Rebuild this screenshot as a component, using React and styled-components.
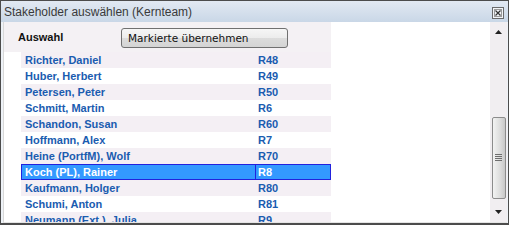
import React from 'react';
import {styled, createGlobalStyle} from 'styled-components';

const GlobalStyle = createGlobalStyle`
  html, body {
    margin: 0;
    padding: 0;
    background: #ffffff;
  }
`

const people = [
    {name: 'Richter, Daniel', code: 'R48'},
    {name: 'Huber, Herbert', code: 'R49'},
    {name: 'Petersen, Peter', code: 'R50'},
    {name: 'Schmitt, Martin', code: 'R6'},
    {name: 'Schandon, Susan', code: 'R60'},
    {name: 'Hoffmann, Alex', code: 'R7'},
    {name: 'Heine (PortfM), Wolf', code: 'R70'},
    {name: 'Koch (PL), Rainer', code: 'R8', selected: true},
    {name: 'Kaufmann, Holger', code: 'R80'},
    {name: 'Schumi, Anton', code: 'R81'},
    {name: 'Neumann (Ext.), Julia', code: 'R9'},
]

const WindowStyled = styled.div`
  box-sizing: border-box;
  width: 509px;
  height: 225px;
  border: 1px solid #4c4c4c;
  border-bottom-width: 2px;
  background: #eef2f7;
  display: flex;
  flex-direction: column;
  font-family: "Liberation Sans", Arial, sans-serif;
  overflow: hidden;
`

const TitleBarStyled = styled.div`
  height: 21px;
  flex-shrink: 0;
  display: flex;
  align-items: center;
  justify-content: space-between;
  padding: 0 4px 0 3px;
  background: linear-gradient(#e2e9f2, #c9d7e7);
  color: #3a3a3a;
  font-size: 12px;
`

const CloseButtonStyled = styled.div`
  width: 12px;
  height: 12px;
  margin-top: 3px;
  display: flex;
`

const BodyStyled = styled.div`
  flex: 1;
  display: flex;
  margin: 0 1px 0 2px;
  border-left: 1px solid #d8d8d8;
  border-bottom: 1px solid #e4e4e4;
  background: #ffffff;
  min-height: 0;
`

const ListPanelStyled = styled.div`
  width: 327px;
  display: flex;
  flex-direction: column;
  overflow: hidden;
`

const HeaderStyled = styled.div`
  height: 30px;
  flex-shrink: 0;
  display: flex;
  align-items: center;
  background: #f4f1f4;
`

const HeaderLabelStyled = styled.span`
  width: 103px;
  padding-left: 14px;
  font-size: 11px;
  font-weight: bold;
  color: #111;
`

const PrimaryButtonStyled = styled.button`
  width: 167px;
  height: 20px;
  margin-top: 1px;
  padding: 0 0 0 6px;
  text-align: left;
  border: 1px solid #707070;
  border-radius: 3px;
  background: linear-gradient(#f6f6f6 0%, #ececec 50%, #dcdcdc 51%, #d4d4d4 100%);
  font-family: "DejaVu Sans", Verdana, sans-serif;
  font-size: 10.5px;
  color: #111;
`

const RowsStyled = styled.div`
  margin-left: 17px;
  display: flex;
  flex-direction: column;
`

const RowStyled = styled.div`
  box-sizing: border-box;
  height: 16px;
  display: grid;
  grid-template-columns: 233px 1fr;
  align-items: center;
  font-size: 11px;
  font-weight: bold;
  color: ${props => props.$selected ? '#ffffff' : '#1a5cb0'};
  background: ${props => props.$selected ? '#3399ff' : (props.$tinted ? '#f4eff4' : '#ffffff')};
  border: 1px solid ${props => props.$selected ? '#2222dd' : 'transparent'};
`

const NameCellStyled = styled.span`
  padding-left: 3px;
  white-space: nowrap;
`

const CodeCellStyled = styled.span`
  height: 100%;
  display: flex;
  align-items: center;
  padding-left: 2px;
  border-left: 1px solid ${props => props.$selected ? '#2222dd' : 'transparent'};
`

const FillerStyled = styled.div`
  flex: 1;
`

const ScrollbarStyled = styled.div`
  width: 17px;
  display: flex;
  flex-direction: column;
  align-items: center;
  background: #f1eef1;
`

const ArrowStyled = styled.div`
  height: 20px;
  flex-shrink: 0;
  display: flex;
  align-items: center;
  justify-content: center;
`

const TrackStyled = styled.div`
  flex: 1;
  width: 100%;
  display: flex;
  flex-direction: column;
  justify-content: flex-end;
  align-items: center;
  padding-bottom: 3px;
  box-sizing: border-box;
`

const ThumbStyled = styled.div`
  box-sizing: border-box;
  width: 14px;
  height: 82px;
  border: 1px solid #8c8c8c;
  border-radius: 2px;
  background: linear-gradient(90deg, #f3f3f3, #dcdcdc 60%, #c8c8c8);
  display: flex;
  align-items: center;
  justify-content: center;
`

function CloseIcon() {
    return (
        <svg width="12" height="12" viewBox="0 0 12 12">
            <rect x="0.5" y="0.5" width="11" height="11" fill="#f2f4f7" stroke="#6a6a6a"/>
            <rect x="2.5" y="2.5" width="7" height="7" fill="none" stroke="#9a9a9a"/>
            <path d="M3.5 3.5 L8.5 8.5 M8.5 3.5 L3.5 8.5" stroke="#333" strokeWidth="1.2"/>
        </svg>
    )
}

function ArrowIcon({down}) {
    return (
        <svg width="7" height="4" viewBox="0 0 7 4">
            <path d={down ? 'M0 0 H7 L3.5 4 Z' : 'M0 4 H7 L3.5 0 Z'} fill="#222"/>
        </svg>
    )
}

function GripIcon() {
    return (
        <svg width="7" height="8" viewBox="0 0 7 8">
            <path d="M0 0.5 H7 M0 2.5 H7 M0 4.5 H7 M0 6.5 H7" stroke="#6e6e6e"/>
        </svg>
    )
}

export default function App() {
    return (
        <>
            <GlobalStyle/>
            <WindowStyled>
                <TitleBarStyled>
                    <span>Stakeholder auswählen (Kernteam)</span>
                    <CloseButtonStyled><CloseIcon/></CloseButtonStyled>
                </TitleBarStyled>
                <BodyStyled>
                    <ListPanelStyled>
                        <HeaderStyled>
                            <HeaderLabelStyled>Auswahl</HeaderLabelStyled>
                            <PrimaryButtonStyled type='button'>Markierte übernehmen</PrimaryButtonStyled>
                        </HeaderStyled>
                        <RowsStyled>
                            {people.map((person, index) => (
                                <RowStyled key={person.code}
                                           $selected={person.selected}
                                           $tinted={index % 2 === 0}>
                                    <NameCellStyled>{person.name}</NameCellStyled>
                                    <CodeCellStyled $selected={person.selected}>{person.code}</CodeCellStyled>
                                </RowStyled>
                            ))}
                        </RowsStyled>
                    </ListPanelStyled>
                    <FillerStyled/>
                    <ScrollbarStyled>
                        <ArrowStyled><ArrowIcon/></ArrowStyled>
                        <TrackStyled>
                            <ThumbStyled><GripIcon/></ThumbStyled>
                        </TrackStyled>
                        <ArrowStyled><ArrowIcon down/></ArrowStyled>
                    </ScrollbarStyled>
                </BodyStyled>
            </WindowStyled>
        </>
    )
}
